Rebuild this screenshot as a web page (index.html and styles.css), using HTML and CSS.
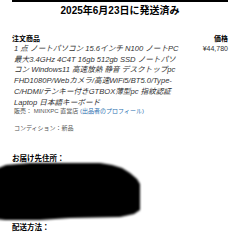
FILE: index.html
```html
<!DOCTYPE html>
<html lang="ja">
<head>
    <meta charset="UTF-8">
    <meta name="viewport" content="width=device-width, initial-scale=1.0">
    <title>注文詳細</title>
    <link rel="stylesheet" href="styles.css">
</head>
<body>

    <div class="page">
        <div class="top-rule"></div>
        <h1 class="title">2025年6月23日に発送済み</h1>

        <div class="order-head">
            <span>注文商品</span>
            <span>価格</span>
        </div>
        <div class="item">
            <p class="item-name">1 点 ノートパソコン 15.6インチ N100 ノートPC<br>最大3.4GHz 4C4T 16gb 512gb SSD ノートパソ<br>コン Windows11 高速放熱 静音 デスクトップpc<br>FHD1080P/Webカメラ/高速WiFi5/BT5.0/Type-<br>C/HDMI/テンキー付きGTBOX薄型pc 指紋認証<br>Laptop 日本語キーボード</p>
            <span class="price">¥44,780</span>
        </div>
        <p class="meta seller">販売： MINIXPC 直営店 <a href="#">(出品者のプロフィール)</a></p>
        <p class="meta condition">コンディション：新品</p>

        <h3 class="section">お届け先住所：</h3>
        <!-- address hidden -->
        <svg class="redact" width="145" height="62" viewBox="0 0 145 62">
            <defs>
                <filter id="soft"><feGaussianBlur stdDeviation="1.2"/></filter>
            </defs>
            <path filter="url(#soft)" fill="#000" d="M-4 8 L6 4 L30 2 L100 2 L112 4 L122 7 L130 12 L137 18 L140 23 L140 49 L134 53 L120 56 L70 57 L40 59 L5 59 L-4 58 Z"/>
        </svg>

        <h3 class="section after">配送方法：</h3>
    </div>

</body>
</html>
```

FILE: styles.css
```css
body {
    margin: 0;
    padding: 0;
    font-family: 'Liberation Sans', 'Noto Sans CJK JP', sans-serif;
    background: #fff;
    color: #333;
}

.page {
    padding: 0 12px;
}

.top-rule {
    height: 2px;
    background: #000;
}

.title {
    margin: 2px 0 0;
    font-size: 10px;
    line-height: 13px;
    text-align: center;
    color: #000;
}

.order-head {
    display: flex;
    justify-content: space-between;
    margin-top: 17px;
    font-size: 7px;
    font-weight: bold;
    line-height: 10px;
    color: #000;
}

.item {
    display: flex;
    justify-content: space-between;
}

.item-name {
    margin: 0;
    padding-left: 2px;
    font-size: 7.6px;
    line-height: 10.7px;
    font-style: italic;
    white-space: nowrap;
    color: #333;
}

.price {
    font-size: 7px;
    line-height: 10.7px;
    color: #333;
}

.meta {
    margin: 0;
    padding-left: 2px;
    font-size: 6px;
    line-height: 9px;
    color: #555;
}

.meta a {
    color: #2a6fb0;
    text-decoration: none;
}

.seller {
    margin-top: -1px;
}

.condition {
    margin-top: 8px;
}

.section {
    margin: 21px 0 0;
    font-size: 7.5px;
    line-height: 10px;
    color: #000;
}

.redact {
    display: block;
    margin: -3px 0 0 -12px;
}

.after {
    margin-top: 0;
}
```
